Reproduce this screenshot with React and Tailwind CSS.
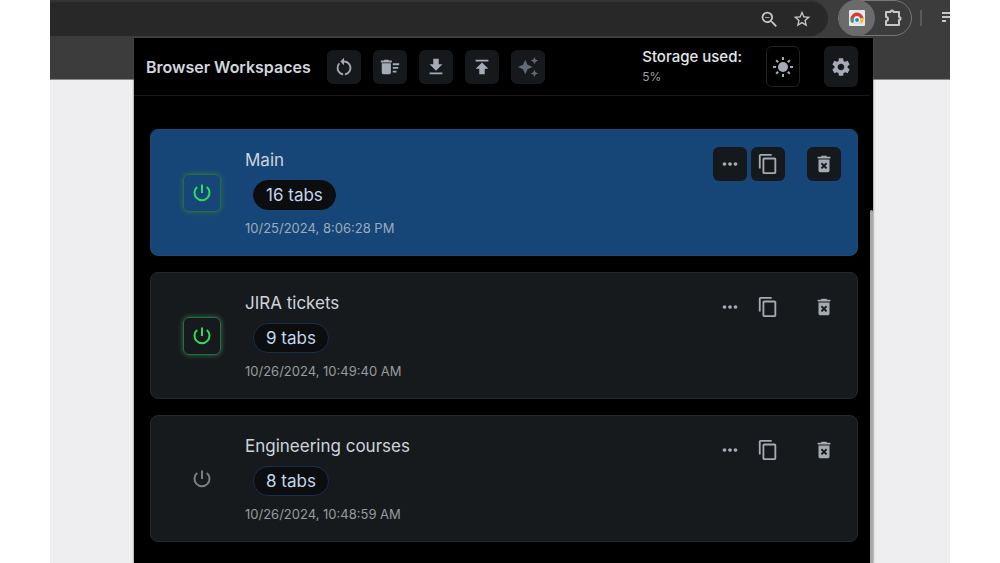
import React, { useState } from "react";
import {
  MdAutoAwesome,
  MdContentCopy,
  MdDeleteForever,
  MdDeleteSweep,
  MdDownload,
  MdMoreHoriz,
  MdPublish,
  MdRestartAlt,
  MdSettings,
  MdStarBorder,
  MdZoomOut,
} from "react-icons/md";

const initialWorkspaces = [
  { id: 1, name: "Main", tabs: 16, date: "10/25/2024, 8:06:28 PM", open: true },
  { id: 2, name: "JIRA tickets", tabs: 9, date: "10/26/2024, 10:49:40 AM", open: true },
  { id: 3, name: "Engineering courses", tabs: 8, date: "10/26/2024, 10:48:59 AM", open: false },
];

const toolbarActions = [
  { label: "Reload workspaces", Icon: MdRestartAlt },
  { label: "Clear all workspaces", Icon: MdDeleteSweep },
  { label: "Import workspaces", Icon: MdDownload },
  { label: "Export workspaces", Icon: MdPublish },
  { label: "Group with AI", Icon: MdAutoAwesome, disabled: true },
];

const ExtensionLogo = () => (
  <svg width="16" height="16" viewBox="0 0 16 16" aria-hidden="true">
    <rect width="16" height="16" rx="1" fill="#e4e8f0" />
    <path d="M1.5 9a6.5 6.5 0 0 1 13 0H11a3 3 0 0 0-6 0z" fill="#d93a35" />
    <path d="M1.5 8.5L5 7.5V13H3a4 4 0 0 1-1.5-4.5z" fill="#4a9c5a" />
    <path d="M11 8h3.4a5 5 0 0 1-1.9 5.5H10z" fill="#f2c230" />
    <path d="M4 12h8v2H4z" fill="#d5dbe8" />
    <circle cx="8" cy="10" r="2.5" fill="#3b78d8" stroke="#fff" />
  </svg>
);

const PuzzleIcon = () => (
  <svg
    width="20"
    height="20"
    viewBox="0 0 20 20"
    fill="none"
    stroke="#c7c7c7"
    strokeWidth="2"
    strokeLinejoin="round"
    aria-hidden="true"
  >
    <path d="M3 4h4.5a1.5 1.5 0 0 1 3 0H16v5a1.5 1.5 0 0 1 0 3v5H3v-4a2 2 0 0 0 0-4z" />
  </svg>
);

const PowerIcon = () => (
  <svg
    width="22"
    height="22"
    viewBox="0 0 22 22"
    fill="none"
    stroke="currentColor"
    strokeWidth="2"
    aria-hidden="true"
  >
    <path d="M11 2.5v8.5" />
    <path d="M6.2 5a7.500 7.500 0 1 0 9.600 0" />
  </svg>
);

const SunIcon = () => (
  <svg
    width="22"
    height="22"
    viewBox="0 0 22 22"
    fill="none"
    stroke="currentColor"
    strokeWidth="2"
    aria-hidden="true"
  >
    <circle cx="11" cy="11" r="5" fill="currentColor" stroke="none" />
    <path d="M11 1v3M11 18v3M1 11h3M18 11h3M4.200 4.200l2 2M15.800 15.800l2 2M4.200 17.800l2-2M15.800 6.200l2-2" />
  </svg>
);

const BrowserBar = () => (
  <div className="flex h-20 items-start border-b border-[#8a8a8a] bg-[#3c3c3c]">
    <div className="flex h-9 flex-1 items-center justify-end gap-3 rounded-r-full border-t-2 border-[#333333] bg-[#282828] pr-4 text-[#c7c7c7]">
      <button type="button" aria-label="Zoom">
        <MdZoomOut size={21} />
      </button>
      <button type="button" aria-label="Bookmark this tab">
        <MdStarBorder size={20} />
      </button>
    </div>
    <div className="ml-[10px] flex h-9 items-center rounded-full border border-[#777777] pr-2">
      <button
        type="button"
        aria-label="Browser Workspaces"
        className="flex size-9 items-center justify-center rounded-full bg-[#6b6b6b]"
      >
        <ExtensionLogo />
      </button>
      <button type="button" aria-label="Extensions" className="ml-2">
        <PuzzleIcon />
      </button>
    </div>
    <div className="ml-2 mt-[10px] h-4 w-[2px] bg-[#5a5a5a]" />
    <div className="ml-5 mt-3 flex w-2 flex-col gap-[2px]">
      <div className="h-[2px] bg-[#c7c7c7]" />
      <div className="h-[2px] bg-[#c7c7c7]" />
      <div className="h-[2px] w-1 bg-[#c7c7c7]" />
    </div>
  </div>
);

const PopupHeader = () => {
  return (
    <header className="flex h-[58px] items-center border-b border-[#17191b] px-3">
      <h1 className="text-base font-semibold text-[#d0d6de]">Browser Workspaces</h1>
      <div className="ml-4 flex gap-3">
        {toolbarActions.map(({ label, Icon, disabled }) => (
          <button
            key={label}
            type="button"
            aria-label={label}
            disabled={disabled}
            className="flex size-[34px] items-center justify-center rounded-md bg-[#15191c] text-[#a4abb5] disabled:text-[#626a73]"
          >
            <Icon size={22} />
          </button>
        ))}
      </div>
      <div className="ml-auto">
        <p className="text-[15px] font-medium leading-5 text-[#e3e6ea]">Storage used:</p>
        <p className="text-xs leading-5 text-[#9b9fa5]">5%</p>
      </div>
      <button
        type="button"
        aria-label="Toggle theme"
        className="ml-6 flex h-[41px] w-[34px] items-center justify-center rounded-md border border-[#1d2226] text-[#a4abb5]"
      >
        <SunIcon />
      </button>
      <button
        type="button"
        aria-label="Settings"
        className="ml-6 flex h-[41px] w-[34px] items-center justify-center rounded-md bg-[#15191c] text-[#a4abb5]"
      >
        <MdSettings size={22} />
      </button>
    </header>
  );
};

const WorkspaceCard = ({ workspace, active, onToggle }) => {
  const { name, tabs, date, open } = workspace;
  const actionClass = `flex size-[34px] items-center justify-center rounded-md text-[#a4abb5] ${
    active ? "bg-[#15191c]" : ""
  }`;

  return (
    <li
      className={`flex h-[127px] rounded-lg border pl-8 pr-4 ${
        active ? "border-[#1c4a78] bg-[#164677]" : "border-[#24282c] bg-[#171a1d]"
      }`}
    >
      <button
        type="button"
        aria-label={open ? `Close ${name}` : `Open ${name}`}
        onClick={onToggle}
        className={`flex size-[38px] items-center justify-center self-center rounded-md border ${
          open
            ? "border-[#2b6a45] text-[#2fdc58] shadow-[0_0_5px_#2b7a45]"
            : "border-transparent text-[#7d7d7d]"
        }`}
      >
        <PowerIcon />
      </button>
      <div className="ml-6 flex flex-1 flex-col items-start pt-4">
        <h2 className="text-[17px] leading-7 text-[#ced4db]">{name}</h2>
        <span
          className={`ml-2 mt-[6px] rounded-full border bg-[#0b0d0f] px-3 text-[17px] leading-7 text-[#c3d7ee] ${
            active ? "border-[#0b0d0f]" : "border-[#17304d]"
          }`}
        >
          {tabs} tabs
        </span>
        <time className={`mt-2 text-[13px] leading-5 ${active ? "text-[#9cabbd]" : "text-[#979a9e]"}`}>
          {date}
        </time>
      </div>
      <div className="flex gap-1 pt-[17px]">
        <button type="button" aria-label={`More options for ${name}`} className={actionClass}>
          <MdMoreHoriz size={22} />
        </button>
        <button type="button" aria-label={`Duplicate ${name}`} className={actionClass}>
          <MdContentCopy size={22} />
        </button>
        <button type="button" aria-label={`Delete ${name}`} className={`ml-[18px] ${actionClass}`}>
          <MdDeleteForever size={22} />
        </button>
      </div>
    </li>
  );
};

const App = () => {
  const [workspaces, setWorkspaces] = useState(initialWorkspaces);

  const toggleWorkspace = (id) => {
    setWorkspaces((prev) =>
      prev.map((item) => (item.id === id ? { ...item, open: !item.open } : item))
    );
  };

  return (
    <div className="min-h-screen bg-white px-[5%] font-[Inter,sans-serif]">
      <div className="flex min-h-screen flex-col bg-[#eeeef0]">
        <BrowserBar />
        <main className="flex flex-1 pl-[84px] pr-[77px]">
          <div className="relative -mt-[42px] flex flex-1 bg-black shadow-[0_0_2px_#555555]">
            <div className="flex-1">
              <PopupHeader />
              <ul className="flex flex-col gap-4 pb-5 pl-4 pr-3 pt-[33px]">
                {workspaces.map((item, index) => (
                  <WorkspaceCard
                    key={item.id}
                    workspace={item}
                    active={index === 0}
                    onToggle={() => toggleWorkspace(item.id)}
                  />
                ))}
              </ul>
            </div>
            {/* scrollbar */}
            <div className="flex w-[3px] flex-col pt-[172px]">
              <div className="flex-1 rounded-t bg-[#a9a9a9]" />
            </div>
          </div>
        </main>
      </div>
    </div>
  );
};

export default App;
